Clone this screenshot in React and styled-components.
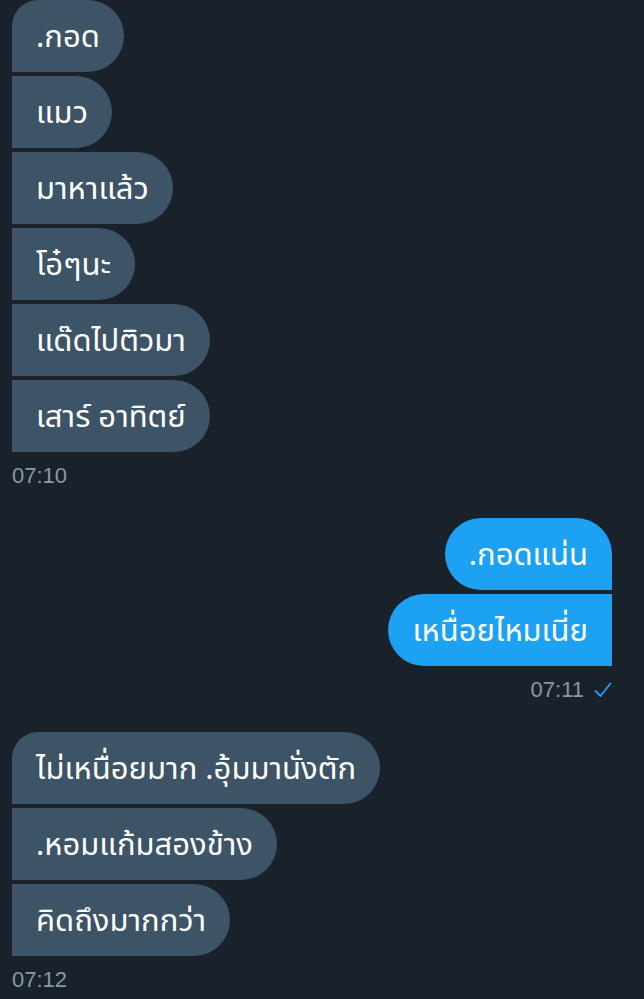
import React from "react";
import styled, { createGlobalStyle } from "styled-components";

const GlobalStyle = createGlobalStyle`
  html, body {
    margin: 0;
    padding: 0;
    background: #19212b;
  }
  body {
    font-family: "Noto Sans Thai", "Noto Sans", "Liberation Sans", sans-serif;
  }
`;

const Page = styled.div`
  width: 644px;
  min-height: 999px;
  background: #19212b;
  display: flex;
  flex-direction: column;
  padding: 0 32px 0 12px;
  box-sizing: border-box;
`;

const Group = styled.div`
  display: flex;
  flex-direction: column;
  align-items: ${(p) => (p.$sent ? "flex-end" : "flex-start")};
  gap: 4px;
  margin-bottom: 29px;
`;

const radius = (sent, pos) => {
  const r = "36px";
  if (sent) {
    if (pos === "first") return `${r} ${r} 0 ${r}`;
    return `${r} 0 0 ${r}`;
  }
  if (pos === "first") return `26px ${r} ${r} 0`;
  return `0 ${r} ${r} 0`;
};

const Bubble = styled.div`
  height: 72px;
  display: flex;
  align-items: center;
  padding: 2px 24px 0;
  box-sizing: border-box;
  font-size: 31px;
  line-height: 1;
  color: #ffffff;
  white-space: nowrap;
  background: ${(p) => (p.$sent ? "#1da1f2" : "#3d5466")};
  border-radius: ${(p) => radius(p.$sent, p.$pos)};
`;

const Time = styled.div`
  margin-top: 7px;
  display: flex;
  align-items: center;
  gap: 10px;
  font-family: "Liberation Sans", Arial, sans-serif;
  font-size: 22px;
  line-height: 26px;
  color: #8899a6;
`;

const Check = () => (
  <svg width="18" height="16" viewBox="0 0 18 16">
    <polyline
      points="1.5,9 6.5,14 16.5,1.5"
      fill="none"
      stroke="#1da1f2"
      strokeWidth="1.8"
      strokeLinecap="round"
      strokeLinejoin="round"
    />
  </svg>
);

const groups = [
  {
    sent: false,
    time: "07:10",
    messages: [".กอด", "แมว", "มาหาแล้ว", "โอ๋ๆนะ", "แด๊ดไปติวมา", "เสาร์ อาทิตย์"],
  },
  {
    sent: true,
    time: "07:11",
    messages: [".กอดแน่น", "เหนื่อยไหมเนี่ย"],
  },
  {
    sent: false,
    time: "07:12",
    messages: ["ไม่เหนื่อยมาก .อุ้มมานั่งตัก", ".หอมแก้มสองข้าง", "คิดถึงมากกว่า"],
  },
];

const App = () => {
  return (
    <Page>
      <GlobalStyle />
      {groups.map((g) => (
        <Group key={g.time} $sent={g.sent}>
          {g.messages.map((m, i) => (
            <Bubble key={i} $sent={g.sent} $pos={i === 0 ? "first" : "rest"}>
              {m}
            </Bubble>
          ))}
          <Time>
            {g.time}
            {g.sent && <Check />}
          </Time>
        </Group>
      ))}
    </Page>
  );
};

export default App;
